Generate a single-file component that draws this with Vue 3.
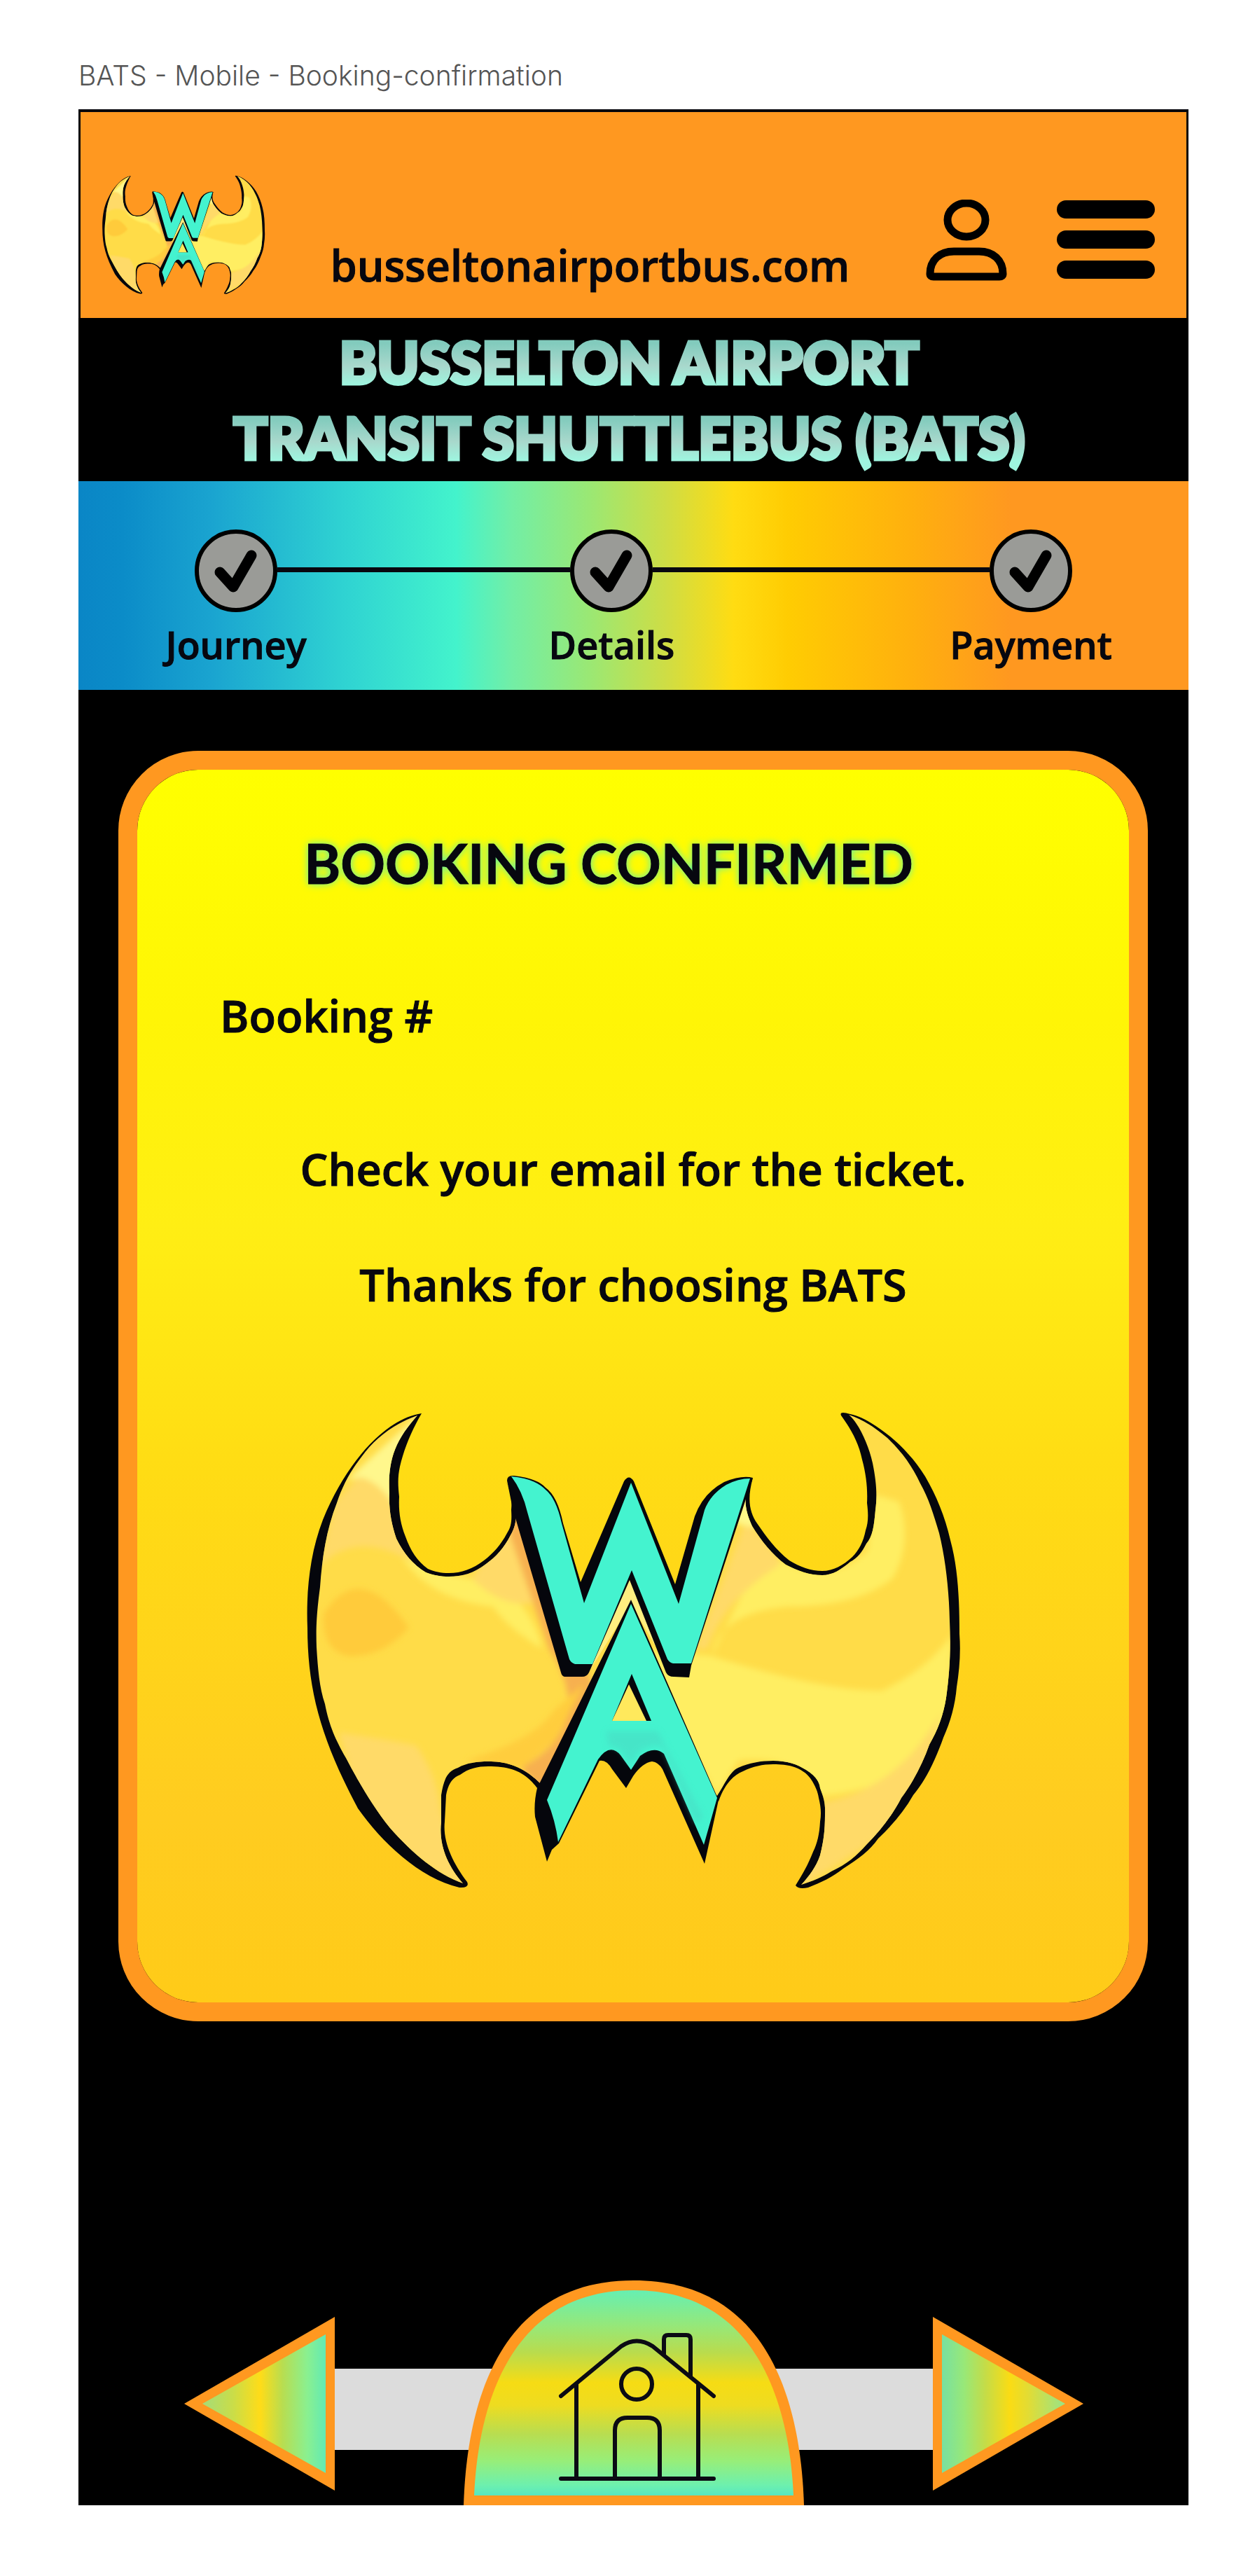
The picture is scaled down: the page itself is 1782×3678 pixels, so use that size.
<script setup>
const steps = [
  { label: 'Journey', line: 418 },
  { label: 'Details', line: 480 },
  { label: 'Payment', line: 0 },
]
</script>

<template>
  <div class="page">
    <svg class="defs" width="0" height="0" aria-hidden="true">
      <defs>
        <clipPath id="wing-clip">
          <path id="wing-fill" d="M162 7 C125 20 100 42 83 65 C65 88 55 108 47 132 C32 170 26 210 23 252 C18 290 17 310 18 338 C20 370 22 395 30 419 C36 450 45 470 60 496 C78 530 98 565 123 596 C155 632 190 662 227 675 C205 650 192 620 196 587 L196 549 C200 525 205 515 220 510 C232 503 248 501 263 501 C290 501 315 508 342 537 L430 465 L500 465 L590 550 C600 535 608 515 620 510 C636 503 652 500 670 500 C690 500 704 505 717 513 C731 522 736 530 737 539 C742 552 745 562 744 577 C744 600 742 615 737 635 C731 652 722 664 710 677 C726 672 740 666 753 658 C775 648 790 635 803 620 C823 600 840 578 853 553 C870 530 883 505 893 477 C905 456 913 435 917 410 C922 375 924 340 922 300 C921 255 916 212 907 175 C899 148 892 125 880 104 C868 78 853 58 833 39 C815 24 797 12 778 6 C792 18 806 48 812 75 C817 100 819 120 816 142 C814 165 812 180 803 190 C797 202 790 211 780 216 C767 227 755 235 740 235 C722 235 706 229 688 220 C668 205 653 186 640 165 C631 145 628 130 633 113 L530 300 L466 200 L400 300 L303 147 C303 158 301 168 295 178 C286 196 274 209 260 219 C243 232 226 237 207 237 C195 237 185 235 174 231 C156 220 143 205 132 183 C125 162 121 142 122 118 C121 98 122 84 126 68 C132 46 142 30 162 7 Z" />
        </clipPath>
        <filter id="soft" x="-20%" y="-20%" width="140%" height="140%">
          <feGaussianBlur stdDeviation="4" />
        </filter>
      </defs>
      <symbol id="bat-logo" viewBox="0 0 940 687">
        <path fill="#05060c" d="M168 4 C115 12 60 75 27 156 C8 205 3 260 5 310 C5 400 25 470 77 568 C110 615 165 668 222 681 Q237 682 233 673 C212 645 198 615 201 587 L203 549 C206 533 212 524 223 520 C235 511 248 508 263 508 C295 508 315 515 333 539 L430 472 L500 472 L592 558 C600 535 612 521 627 515 C641 508 655 505 670 505 C682 505 690 506 697 508 C710 512 718 518 723 525 C730 535 734 545 735 553 C738 565 739 575 737 587 C736 605 733 618 727 630 C720 648 712 662 702 678 Q706 684 720 681 C738 674 755 666 770 654 C792 640 808 628 820 611 C840 592 857 572 870 549 C890 525 903 495 913 467 C923 445 930 420 932 395 C936 370 938 345 936 319 C936 270 934 225 923 185 C915 150 903 122 887 94 C872 70 855 52 837 37 C815 20 798 9 780 5 Q764 0 767 7 C780 25 792 45 797 70 C803 92 805 112 804 132 C806 148 806 160 802 171 C799 187 792 200 783 209 C770 221 756 229 740 229 C724 229 708 223 693 214 C674 199 660 180 647 161 C637 146 632 128 641 96 L530 300 L466 180 L400 300 L360 250 L288 101 C297 118 297 128 296 142 C297 158 296 166 290 175 C281 192 270 204 257 214 C241 226 225 232 207 232 C195 232 187 230 177 226 C162 215 152 200 145 180 C137 160 135 142 136 123 C134 105 134 94 137 80 C143 55 152 32 168 4 Z" />
        <use href="#wing-fill" fill="#ffdc48" />
        <g clip-path="url(#wing-clip)">
          <g filter="url(#soft)">
            <path fill="#fff78c" d="M170 0 L60 100 Q100 85 132 150 L130 70 Z" />
            <path fill="#ffda68" d="M78 95 Q110 98 145 160 L180 232 Q80 160 20 225 L45 130 Z" />
            <path fill="#ffcb3a" d="M28 290 Q80 210 150 310 Q110 355 60 350 Q25 340 28 290 Z" />
            <path fill="#ffee62" d="M140 210 Q230 245 280 245 Q330 290 340 340 Q290 310 270 280 Q180 270 140 210 Z" />
            <path fill="#ffda68" d="M300 150 L345 270 Q290 290 240 240 Z" />
            <path fill="#ffda68" d="M50 460 Q120 470 160 478 Q190 520 195 570 L232 685 L90 600 Z" />
            <path fill="#f7b050" d="M293 175 L300 140 L412 390 L410 440 L345 550 L310 510 Q420 450 350 340 Z" />
            <path fill="#ffcd3e" d="M230 500 Q330 470 355 430 L400 390 L360 470 L310 512 Z" />
            <path fill="#ffee62" d="M470 340 L580 350 Q740 400 825 400 Q890 370 925 320 L925 450 L830 530 Q770 550 735 550 Q710 490 620 500 L590 550 L470 330 Z" />
            <path fill="#ffee62" d="M583 350 Q590 290 690 280 Q790 280 840 240 Q870 190 850 130 L815 120 L805 200 Q740 260 660 200 Q620 270 583 350 Z" />
            <path fill="#ffda68" d="M630 160 Q670 190 680 220 Q600 270 575 340 L560 340 Z" />
            <path fill="#fff88a" d="M640 100 L613 160 Q650 170 650 165 Z" />
            <path fill="#ffda68" d="M740 560 Q850 540 910 430 L870 580 L710 680 Z" />
          </g>
        </g>
        <path fill="#ffee80" d="M465 240 L405 376 L467 276 L525 376 Z" />
        <path fill="#05060c" d="M290 100 Q290 92 300 93 Q334 97 345 110 Q362 122 370 161 L395 245 L457 101 Q464 90 471 101 L530 248 L558 151 Q570 118 600 102 Q625 92 641 96 L553 364 L550 381 L528 380 Q520 380 517 374 L465 242 L407 374 Q404 380 397 380 L372 380 Q368 379 367 374 L298 140 Z" />
        <path fill="#44f3cf" d="M296 94 Q330 97 345 113 Q360 125 368 161 L400 275 L467 103 L535 276 L572 142 Q580 120 603 106 Q620 97 637 97 L553 361 L527 361 Q522 360 519 355 L468 228 L412 362 L387 362 Q381 360 379 355 L319 145 Q312 115 296 94 Z" />
        <path fill="#05060c" d="M467 270 L333 539 Q328 560 330 580 L347 644 L354 627 L364 618 L422 500 Q432 498 440 512 L460 539 L470 522 Q483 503 497 501 Q506 502 512 512 L572 647 L592 556 Z" />
        <path fill="#44f3cf" d="M467 276 L347 556 Q359 585 363 616 L420 498 Q437 474 452 492 L467 513 L480 493 Q500 478 514 490 L571 620 L590 553 Z" />
        <path fill="#48d8c2" opacity=".5" filter="url(#soft)" d="M432 458 L505 458 L570 580 L560 590 L512 480 Q500 474 480 486 L467 505 L452 485 Q440 478 435 480 Z" />
        <path fill="#05060c" d="M468 376 L440 443 L496 443 Z" />
        <path fill="#ffe95c" d="M464 391 L440 443 L489 443 Z" />
      </symbol>
    </svg>

    <p class="caption">BATS - Mobile - Booking-confirmation</p>

    <div class="frame">
      <header class="topbar">
        <svg class="logo-small" role="img" aria-label="WA"><use href="#bat-logo" /></svg>
        <a class="site" href="#">busseltonairportbus.com</a>
        <button class="icon-button" type="button" aria-label="Account">
          <svg width="116" height="116" viewBox="0 0 116 116" fill="none" stroke="#000" stroke-width="11">
            <ellipse cx="58" cy="29" rx="27" ry="24" />
            <path stroke-linejoin="round" d="M6 106 C6 86 20 74 40 74 H76 C96 74 110 86 110 106 Q110 110 105 110 H11 Q6 110 6 106 Z" />
          </svg>
        </button>
        <button class="icon-button menu" type="button" aria-label="Menu">
          <span></span><span></span><span></span>
        </button>
      </header>

      <h1 class="title"><span>BUSSELTON AIRPORT<br />TRANSIT SHUTTLEBUS (BATS)</span></h1>

      <ol class="steps">
        <template v-for="step in steps" :key="step.label">
          <li class="step">
            <svg width="118" height="118" viewBox="0 0 118 118" fill="none">
              <circle cx="59" cy="59" r="56" fill="#9a9b97" stroke="#000" stroke-width="6" />
              <path d="M36 61 L55 82 L81 37" stroke="#000" stroke-width="15" stroke-linecap="round" stroke-linejoin="round" />
            </svg>
            <span>{{ step.label }}</span>
          </li>
          <li v-if="step.line" class="line" :style="{ flexGrow: step.line }" aria-hidden="true"></li>
        </template>
      </ol>

      <main class="card">
        <h2>BOOKING CONFIRMED</h2>
        <p class="booking">Booking #</p>
        <p class="note">Check your email for the ticket.</p>
        <p class="thanks">Thanks for choosing BATS</p>
        <svg class="logo-large" role="img" aria-label="WA"><use href="#bat-logo" /></svg>
      </main>

      <nav class="bottom">
        <button class="icon-button arrow" type="button" aria-label="Previous">
          <svg width="215" height="248" viewBox="0 0 215 248">
            <defs>
              <linearGradient id="arrow-left">
                <stop offset="0" stop-color="#a5dc78" />
                <stop offset=".25" stop-color="#cadd48" />
                <stop offset=".47" stop-color="#ffdc18" />
                <stop offset=".65" stop-color="#b8dd50" />
                <stop offset=".85" stop-color="#8af090" />
                <stop offset="1" stop-color="#62eab4" />
              </linearGradient>
            </defs>
            <path fill="#ff9820" d="M0 124 L215 0 V248 Z" />
            <path fill="url(#arrow-left)" d="M26 124 L202 25 V223 Z" />
          </svg>
        </button>
        <span class="bar"></span>
        <button class="icon-button home" type="button" aria-label="Home">
          <svg width="486" height="321" viewBox="0 0 486 321">
            <defs>
              <linearGradient id="dome" x2="0" y2="1">
                <stop offset="0" stop-color="#66efb2" />
                <stop offset=".17" stop-color="#95e87a" />
                <stop offset=".3" stop-color="#b8dc4e" />
                <stop offset=".45" stop-color="#f6dc14" />
                <stop offset=".56" stop-color="#eedc20" />
                <stop offset=".7" stop-color="#b8dd50" />
                <stop offset=".83" stop-color="#98ee78" />
                <stop offset=".95" stop-color="#6df0ae" />
                <stop offset="1" stop-color="#58e6c0" />
              </linearGradient>
            </defs>
            <path fill="#ff9820" d="M0 321 C5 163 57 0 243 0 S481 163 486 321 Z" />
            <path fill="url(#dome)" d="M15 307 C22 158 78 14 243 14 S464 158 471 307 Z" />
            <g fill="none" stroke="#0b0b14" stroke-width="6" stroke-linecap="round" stroke-linejoin="round">
              <path d="M139 165 L225 94 Q247 79 270 94 L357 165" />
              <path d="M139 283 H357 M161 149 V283 M335 149 V283" />
              <path d="M286 105 V84 Q286 78 292 78 H318 Q324 78 324 84 V137" />
              <circle cx="247" cy="148" r="22" />
              <path d="M216 283 V214 Q216 196 234 196 H262 Q280 196 280 214 V283" />
            </g>
          </svg>
        </button>
        <span class="bar"></span>
        <button class="icon-button arrow" type="button" aria-label="Next">
          <svg width="215" height="248" viewBox="0 0 215 248">
            <defs>
              <linearGradient id="arrow-right">
                <stop offset="0" stop-color="#78e0a0" />
                <stop offset=".18" stop-color="#98e878" />
                <stop offset=".35" stop-color="#c4dc48" />
                <stop offset=".55" stop-color="#fadc14" />
                <stop offset=".7" stop-color="#e2dc34" />
                <stop offset="1" stop-color="#98e488" />
              </linearGradient>
            </defs>
            <path fill="#ff9820" d="M215 124 L0 0 V248 Z" />
            <path fill="url(#arrow-right)" d="M189 124 L13 25 V223 Z" />
          </svg>
        </button>
      </nav>
    </div>
  </div>
</template>

<style>
body {
  margin: 0;
  background: #fff;
}
</style>

<style scoped>
.page {
  padding: 84px 85px 99px 112px;
  font-family: "Open Sans", "Noto Sans", sans-serif;
  color: #07070f;
}

.defs {
  position: absolute;
}

.caption {
  margin: 0 0 24px;
  font: 300 39px/48px Inter, sans-serif;
  color: #555;
}

.frame {
  background: #000;
}

.topbar {
  display: flex;
  align-items: flex-end;
  height: 261px;
  padding: 0 45px 33px 30px;
  border: solid #06060c;
  border-width: 4px 3px 0;
  background: #ff9820;
}

.logo-small {
  width: 234px;
  height: 171px;
}

.site {
  margin: 0 auto 10px;
  padding-right: 16px;
  font-size: 61px;
  line-height: 64px;
  font-weight: 600;
  -webkit-text-stroke: 1px;
  color: inherit;
  text-decoration: none;
}

.icon-button {
  display: block;
  padding: 0;
  border: 0;
  background: none;
  cursor: pointer;
}

.icon-button svg {
  display: block;
}

.topbar .icon-button {
  margin-bottom: 20px;
}

.topbar .menu {
  display: flex;
  flex-direction: column;
  gap: 17px;
  width: 140px;
  margin: 0 0 23px 71px;
}

.menu span {
  height: 26px;
  border-radius: 13px;
  background: #000;
}

.title {
  margin: 0;
  padding: 9px 12px 8px 0;
  text-align: center;
  font-family: Lato, sans-serif;
  font-size: 81px;
  line-height: 108px;
  font-weight: 900;
}

.title span {
  display: block;
  color: transparent;
  -webkit-text-stroke: 5px transparent;
  background: linear-gradient(#82cbbd 25%, #a8d8cc 55%, #9ef5df 80%) 0 0 / 100% 108px;
  -webkit-background-clip: text;
  background-clip: text;
}

.steps {
  display: flex;
  align-items: flex-start;
  margin: 0;
  padding: 69px 166px 35px;
  list-style: none;
  background: linear-gradient(90deg, #0a86c6, #0b8cc8 4%, #1aa4d0 12%, #2fd3d2 24%, #43f3cc 34%, #72eea6 39%, #9ae874 46%, #cfdd44 53%, #ffdc12 59%, #ffcc02 64%, #ffb00e 75%, #ff9820 84%);
}

.step {
  display: flex;
  flex-direction: column;
  align-items: center;
  width: 118px;
  gap: 16px;
  font-size: 54px;
  line-height: 60px;
  font-weight: 600;
  -webkit-text-stroke: 1px;
  white-space: nowrap;
}

.step svg {
  display: block;
}

.line {
  height: 7px;
  margin-top: 54px;
  background: #07070f;
}

.card {
  display: flex;
  flex-direction: column;
  align-items: center;
  margin: 87px 58px 370px 57px;
  padding: 91px 0 158px;
  border: 27px solid #ff9820;
  border-radius: 114px;
  background: linear-gradient(#ffff00, #fff506 20%, #ffee14 37%, #ffdc14 57%, #ffcc20 85%, #ffcb18) padding-box;
  font-size: 63px;
  line-height: 72px;
  font-weight: 600;
}

.card h2 {
  margin: 0 70px 140px 0;
  font-family: Lato, sans-serif;
  font-size: 79px;
  line-height: 84px;
  font-weight: 700;
  -webkit-text-stroke: 1px;
  text-shadow: 0 0 12px #48efb8;
}

.card p {
  margin: 0;
  -webkit-text-stroke: 1px;
}

.card .booking {
  align-self: flex-start;
  margin: 0 0 147px 118px;
}

.card .note {
  margin-bottom: 93px;
}

.logo-large {
  width: 940px;
  max-width: 100%;
  height: 687px;
  margin-top: 144px;
}

.bottom {
  display: flex;
  align-items: flex-end;
  padding: 0 150px 0 151px;
}

.arrow {
  margin-bottom: 21px;
}

.bar {
  flex: 1;
  height: 116px;
  margin: 0 -60px 79px 0;
  background: #dcdcdc;
}

.home {
  position: relative;
}

.home + .bar {
  margin: 0 0 79px -60px;
}
</style>
